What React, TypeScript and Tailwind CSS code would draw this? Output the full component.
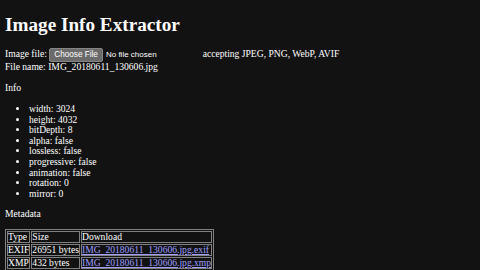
import React from 'react';

const info = [
  ['width', '3024'],
  ['height', '4032'],
  ['bitDepth', '8'],
  ['alpha', 'false'],
  ['lossless', 'false'],
  ['progressive', 'false'],
  ['animation', 'false'],
  ['rotation', '0'],
  ['mirror', '0'],
];

const metadata = [
  { type: 'EXIF', size: '26951 bytes', file: 'IMG_20180611_130606.jpg.exif' },
  { type: 'XMP', size: '432 bytes', file: 'IMG_20180611_130606.jpg.xmp' },
];

const cell = 'border border-[#808080] px-0 py-0 leading-[1.04]';

export default function App() {
  return (
    <div className="min-h-screen bg-[#121212] text-white text-[9.6px] leading-[1.107] px-[5px] py-px font-['Liberation_Serif',serif]">
      <h1 className="text-[19.2px] font-bold leading-[1.15] mt-[12.5px] mb-[12.5px]">Image Info Extractor</h1>

      <div>
        Image file:{' '}
        <span className="inline-block w-[151px]">
          <button className="inline-block align-baseline bg-[#6b6b6b] border border-[#858585] rounded-[2px] px-[4px] py-[1px] text-[8.2px] leading-[1.15] text-white font-['Liberation_Sans',sans-serif]">
            Choose File
          </button>
          <span className="ml-[3px] text-[8px] font-['Liberation_Sans',sans-serif]">No file chosen</span>
        </span>{' '}
        accepting JPEG, PNG, WebP, AVIF
      </div>
      <div>File name: IMG_20180611_130606.jpg</div>

      <p className="mt-[10.6px] mb-[9.6px]">Info</p>
      <ul className="list-disc pl-[24px] mt-[10.6px] mb-[9.6px]">
        {info.map(([k, v]) => (
          <li key={k}>
            {k}: {v}
          </li>
        ))}
      </ul>

      <p className="my-[9.6px]">Metadata</p>
      <table className="border-separate border-spacing-[1px] border border-[#808080]">
        <thead>
          <tr>
            <td className={cell}>Type</td>
            <td className={cell}>Size</td>
            <td className={cell}>Download</td>
          </tr>
        </thead>
        <tbody>
          {metadata.map((m) => (
            <tr key={m.type}>
              <td className={cell}>{m.type}</td>
              <td className={cell}>{m.size}</td>
              <td className={cell}>
                <a href="#" className="text-[#9e9eff] underline">
                  {m.file}
                </a>
              </td>
            </tr>
          ))}
        </tbody>
      </table>
    </div>
  );
}
